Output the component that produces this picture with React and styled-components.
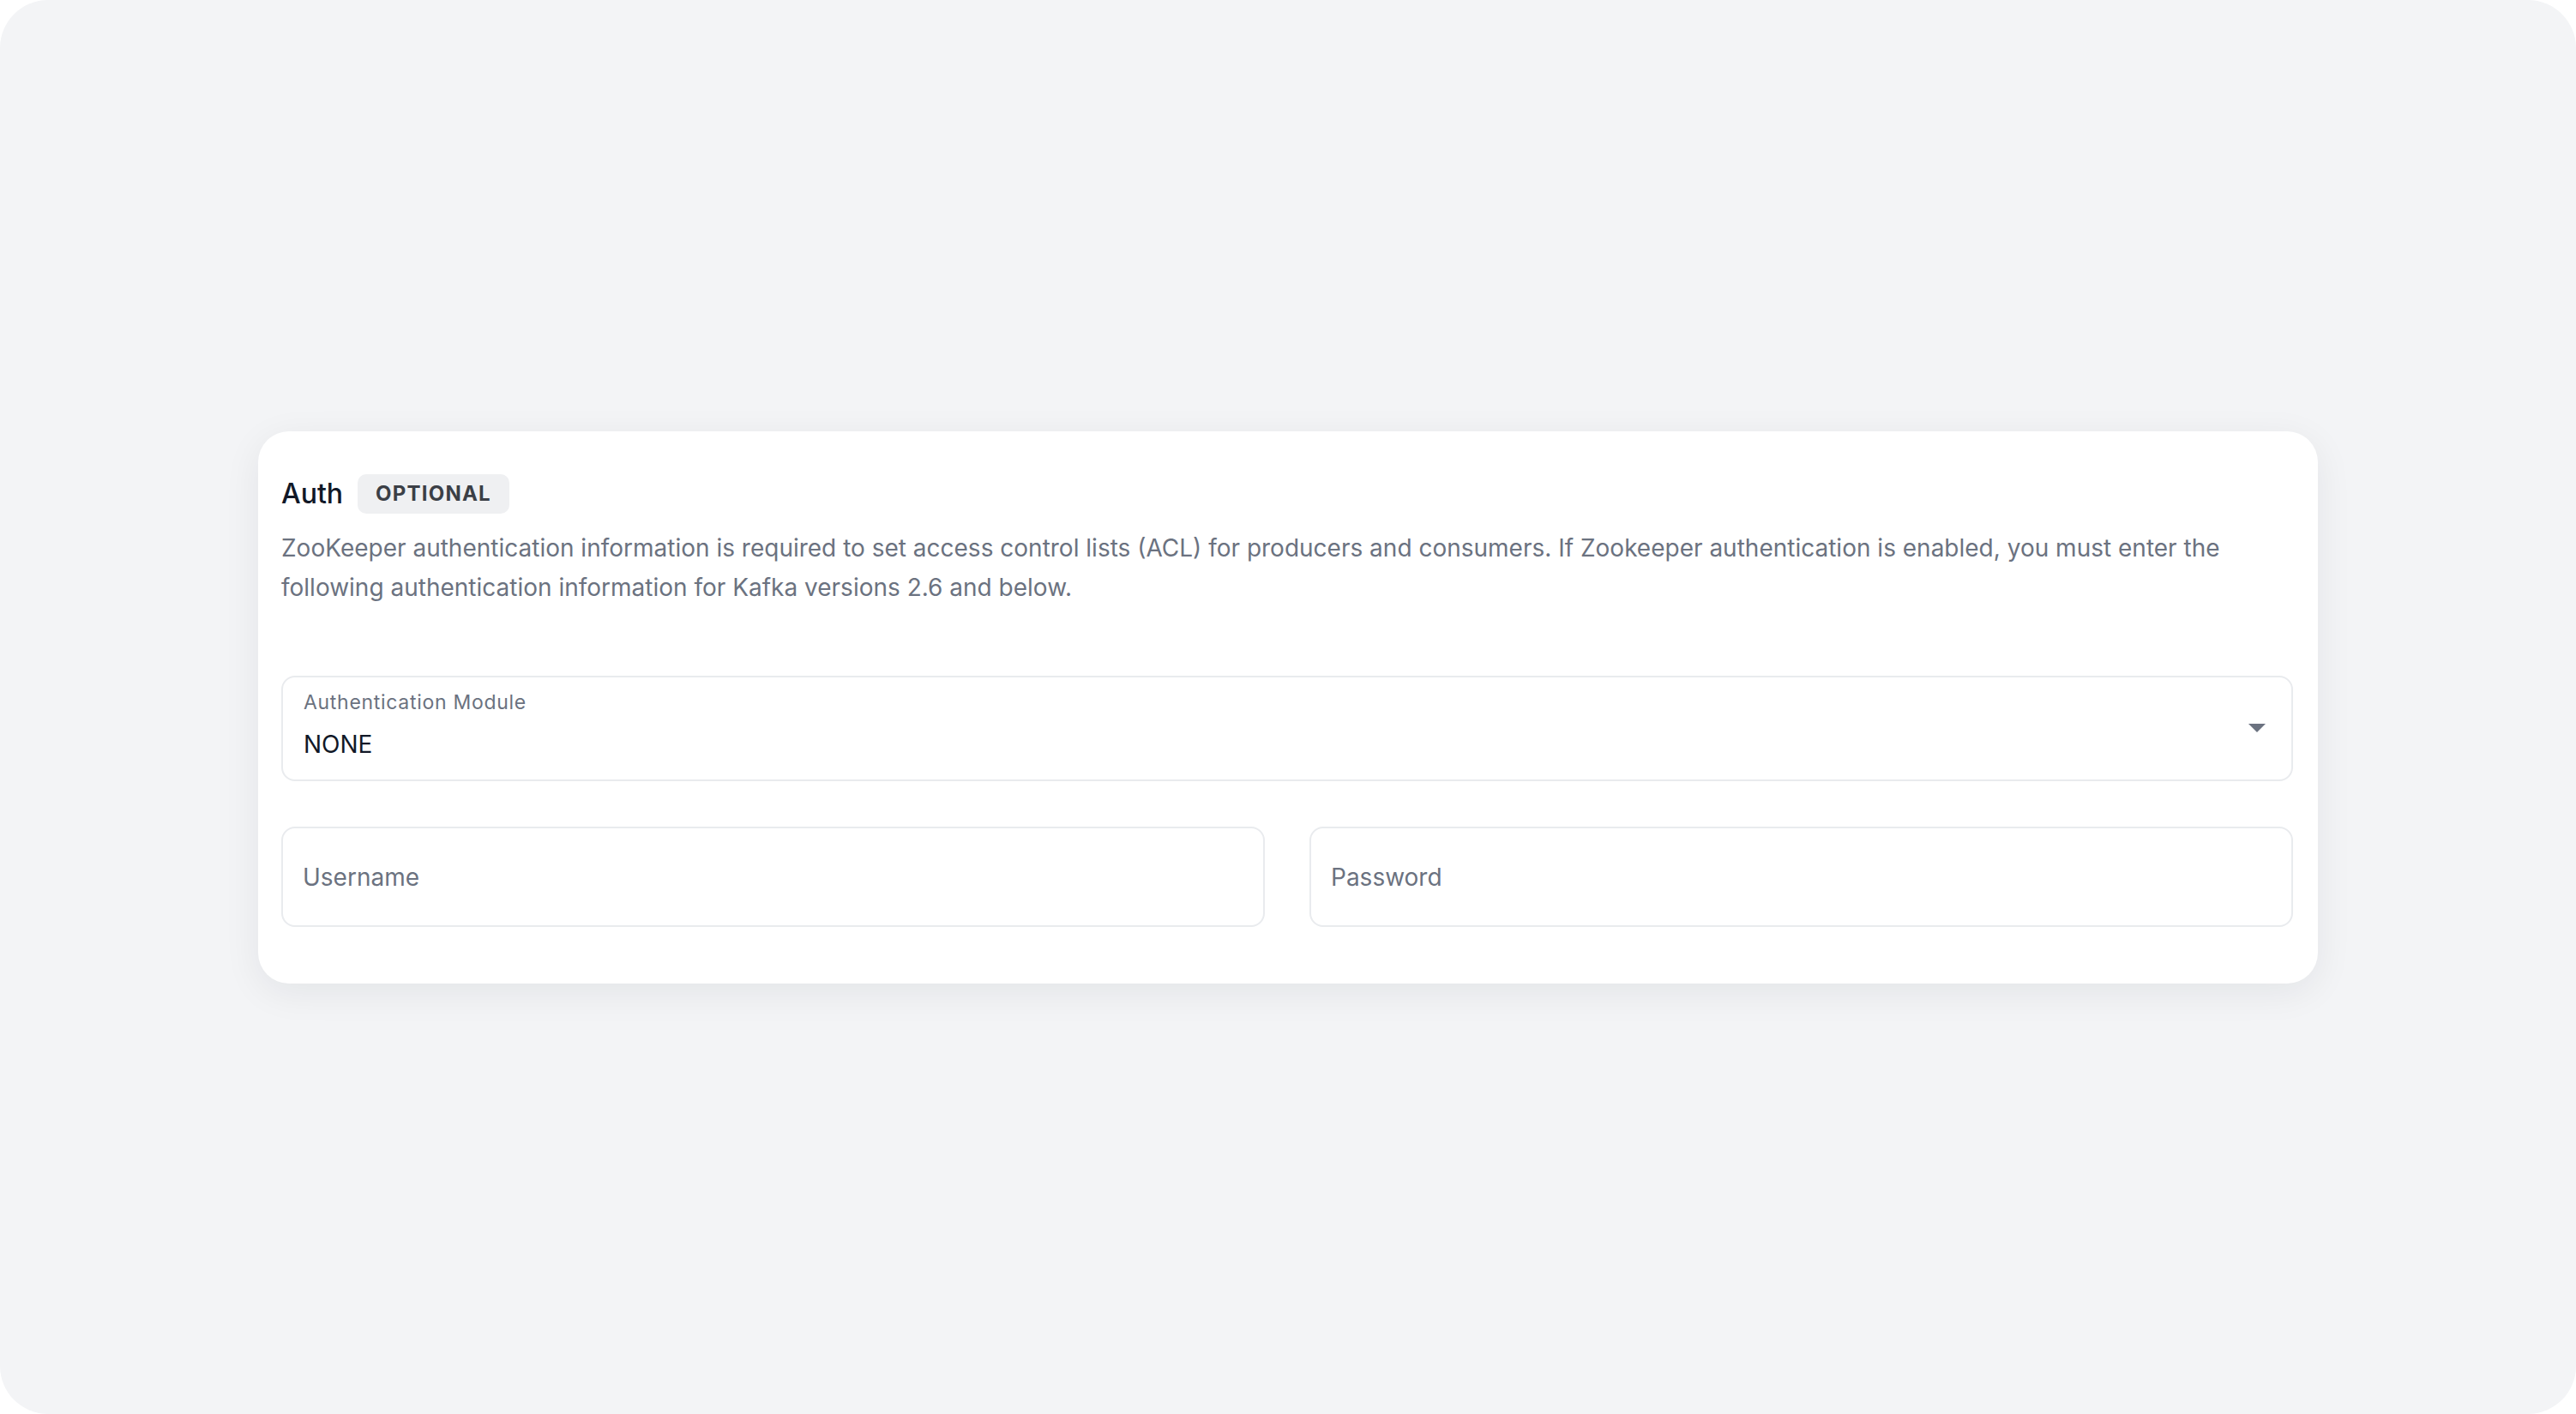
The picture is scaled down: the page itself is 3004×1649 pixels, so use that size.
import React from 'react';
import styled, { createGlobalStyle } from 'styled-components';

const GlobalStyle = createGlobalStyle`
  html, body {
    margin: 0;
    padding: 0;
    background: #ffffff;
  }

  * {
    box-sizing: border-box;
  }
`;

const Page = styled.div`
  display: flex;
  align-items: center;
  justify-content: center;
  width: 3004px;
  height: 1649px;
  background: #f3f4f6;
  border-radius: 56px;
  font-family: Inter, "Noto Sans", sans-serif;
`;

const Card = styled.section`
  display: flex;
  flex-direction: column;
  width: 2402px;
  padding: 50px 29px 66px 27px;
  background: #ffffff;
  border-radius: 36px;
  box-shadow: 0 10px 44px rgba(17, 24, 39, 0.07);
`;

const Header = styled.div`
  display: flex;
  align-items: center;
  gap: 17px;
  height: 46px;
`;

const Title = styled.h2`
  margin: 0;
  font-size: 32px;
  font-weight: 500;
  color: #111827;
  line-height: 46px;
`;

const Badge = styled.span`
  display: inline-flex;
  align-items: center;
  height: 46px;
  padding: 0 21px;
  border-radius: 10px;
  background: #eff0f2;
  color: #3b3f46;
  font-size: 24px;
  font-weight: 700;
  letter-spacing: 1.2px;
`;

const Description = styled.p`
  margin: 17px 0 0;
  font-size: 28px;
  line-height: 46px;
  color: #6b7280;
`;

const Select = styled.div`
  display: flex;
  align-items: center;
  margin-top: 80px;
  height: 123px;
  padding: 0 30px 0 24px;
  border: 2px solid #e9ebee;
  border-radius: 16px;
`;

const SelectBody = styled.div`
  display: flex;
  flex-direction: column;
  flex: 1;
  gap: 17px;
  padding-bottom: 7px;
`;

const SelectLabel = styled.span`
  font-size: 23px;
  line-height: 28px;
  letter-spacing: 0.7px;
  color: #6b7280;
`;

const SelectValue = styled.span`
  font-size: 28px;
  line-height: 36px;
  color: #111827;
`;

const Caret = styled.svg`
  width: 20px;
  height: 10px;
  flex: none;
`;

const Row = styled.div`
  display: grid;
  grid-template-columns: 1fr 1fr;
  gap: 52px;
  margin-top: 53px;
`;

const Field = styled.div`
  display: flex;
  align-items: center;
  height: 117px;
  padding: 2px 23px 0;
  border: 2px solid #e9ebee;
  border-radius: 16px;
  font-size: 28px;
  color: #6b7280;
`;

export default function App() {
  return (
    <>
      <GlobalStyle />
      <Page>
        <Card>
          <Header>
            <Title>Auth</Title>
            <Badge>OPTIONAL</Badge>
          </Header>
          <Description>
            ZooKeeper authentication information is required to set access control lists (ACL) for producers and
            consumers. If Zookeeper authentication is enabled, you must enter the following authentication
            information for Kafka versions 2.6 and below.
          </Description>
          <Select>
            <SelectBody>
              <SelectLabel>Authentication Module</SelectLabel>
              <SelectValue>NONE</SelectValue>
            </SelectBody>
            <Caret viewBox="0 0 20 10">
              <path d="M0 0h20L10 10z" fill="#6b7280" />
            </Caret>
          </Select>
          <Row>
            <Field>Username</Field>
            <Field>Password</Field>
          </Row>
        </Card>
      </Page>
    </>
  );
}
